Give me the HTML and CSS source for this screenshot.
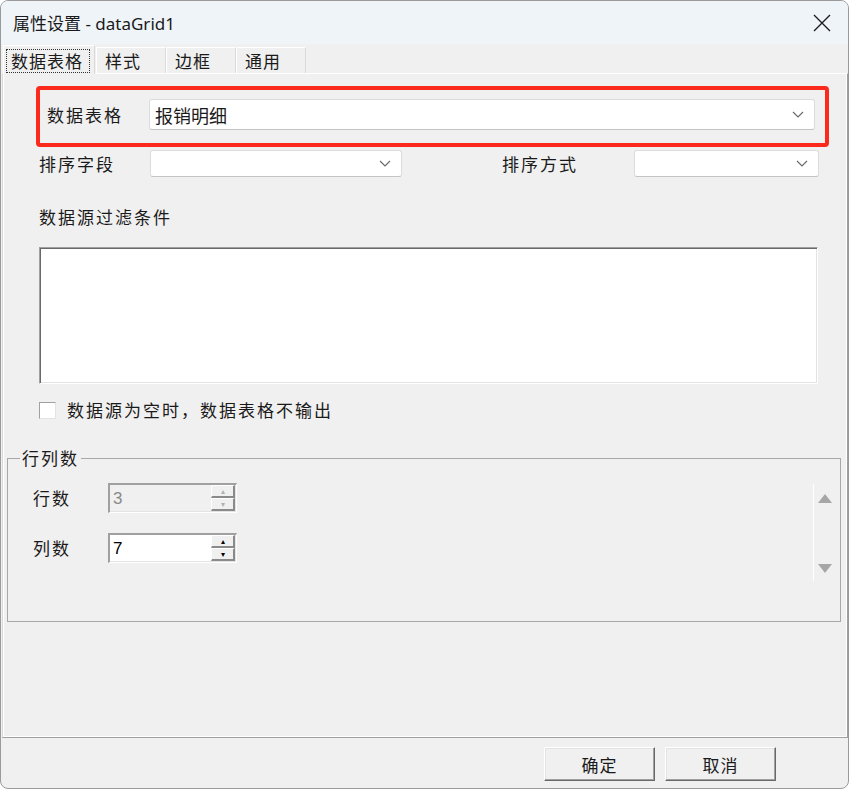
FILE: index.html
```html
<!DOCTYPE html>
<html lang="zh-CN">
<head>
    <meta charset="UTF-8">
    <title>属性设置 - dataGrid1</title>
    <link rel="stylesheet" href="styles.css">
</head>
<body>
    <div class="window">
        <div class="titlebar">
            <span class="title">属性设置 - dataGrid1</span>
            <svg class="close" width="18" height="18" viewBox="0 0 18 18">
                <path d="M1 1 L17 17 M17 1 L1 17" stroke="#1a1a1a" stroke-width="1.3" fill="none"/>
            </svg>
        </div>

        <div class="tabs">
            <div class="tab active"><span class="focus">数据表格</span></div>
            <div class="tab">样式</div>
            <div class="tab">边框</div>
            <div class="tab">通用</div>
        </div>

        <div class="panel">
            <div class="highlight">
                <span class="label">数据表格</span>
                <div class="combo wide">
                    <span class="value">报销明细</span>
                    <svg class="chevron" width="12" height="7" viewBox="0 0 12 7"><path d="M1 1 L6 6 L11 1" stroke="#6a6a6a" stroke-width="1.2" fill="none"/></svg>
                </div>
            </div>

            <div class="sort-row">
                <span class="label sort-field">排序字段</span>
                <div class="combo field-combo">
                    <svg class="chevron" width="12" height="7" viewBox="0 0 12 7"><path d="M1 1 L6 6 L11 1" stroke="#6a6a6a" stroke-width="1.2" fill="none"/></svg>
                </div>
                <span class="label sort-order">排序方式</span>
                <div class="combo order-combo">
                    <svg class="chevron" width="12" height="7" viewBox="0 0 12 7"><path d="M1 1 L6 6 L11 1" stroke="#6a6a6a" stroke-width="1.2" fill="none"/></svg>
                </div>
            </div>

            <div class="filter-label label">数据源过滤条件</div>
            <div class="filter-box"></div>

            <div class="check-row">
                <span class="checkbox"></span>
                <span class="label">数据源为空时，数据表格不输出</span>
            </div>

            <fieldset class="group">
                <legend>行列数</legend>
                <div class="group-body">
                    <div class="fields">
                        <span class="label">行数</span>
                        <div class="spin disabled">
                            <span class="spin-text">3</span>
                            <div class="spin-btns">
                                <span class="spin-btn">&#9652;</span>
                                <span class="spin-btn">&#9662;</span>
                            </div>
                        </div>
                        <span class="label">列数</span>
                        <div class="spin">
                            <span class="spin-text">7</span>
                            <div class="spin-btns">
                                <span class="spin-btn">&#9652;</span>
                                <span class="spin-btn">&#9662;</span>
                            </div>
                        </div>
                    </div>
                    <div class="vscroll">
                        <svg width="14" height="9" viewBox="0 0 14 9"><path d="M7 0 L14 9 L0 9 Z" fill="#a6a6a6"/></svg>
                        <svg width="14" height="9" viewBox="0 0 14 9"><path d="M0 0 L14 0 L7 9 Z" fill="#a6a6a6"/></svg>
                    </div>
                </div>
            </fieldset>
        </div>

        <div class="footer">
            <button class="btn">确定</button>
            <button class="btn">取消</button>
        </div>
    </div>
</body>
</html>
```

FILE: styles.css
```css
body {
    margin: 0;
    background: #ffffff;
    font-family: "Noto Sans CJK SC", "Noto Sans", sans-serif;
    color: #1a1a1a;
}
.window {
    width: 849px;
    height: 789px;
    box-sizing: border-box;
    background: #f0f0f0;
    border: 1px solid #9a9a9a;
    border-radius: 8px;
    overflow: hidden;
}
.titlebar {
    height: 43px;
    background: #eff4f9;
    display: flex;
    align-items: center;
    justify-content: space-between;
    padding: 0 17px 0 12px;
}
.title {
    font-family: "Noto Sans", "Noto Sans CJK SC", sans-serif;
    font-size: 17px;
    color: #1a1a1a;
}
.close { margin-top: 1px; }

/* tabs */
.tabs {
    display: flex;
    align-items: flex-end;
    height: 29px;
    padding-left: 2px;
    position: relative;
    z-index: 1;
}
.tab {
    height: 26px;
    width: 70px;
    box-sizing: border-box;
    padding: 0 0 0 8px;
    font-size: 17px;
    line-height: 25px;
    letter-spacing: 1px;
    border-top: 1px solid #ffffff;
    border-left: 1px solid #ffffff;
    border-right: 1px solid #dadada;
    background: #f0f0f0;
}
.tab.active {
    height: 29px;
    width: 92px;
    padding: 2px 0 0 2px;
    margin-bottom: -1px;
    margin-right: 1px;
}
.focus {
    display: inline-block;
    border: 1px dotted #333;
    padding: 0 6px 0 4px;
    line-height: 22px;
}

/* panel */
.panel {
    margin-left: 1px;
    width: 846px;
    height: 665px;
    box-sizing: border-box;
    border-top: 1px solid #ffffff;
    border-left: 1px solid #d9d9d9;
    border-right: 1px solid #a0a0a0;
    border-bottom: 1px solid #a0a0a0;
    box-shadow: inset 1px 0 #ffffff, inset -1px -1px #ffffff;
}
.label {
    font-size: 17px;
    letter-spacing: 2px;
    line-height: 24px;
    white-space: nowrap;
}
.highlight {
    margin: 12px 0 0 33px;
    width: 793px;
    height: 61px;
    box-sizing: border-box;
    border: 4px solid #fb2a1d;
    border-radius: 4px;
    display: flex;
    align-items: center;
    padding: 0 10px 4px 7px;
}
.highlight .label { width: 102px; }
.combo {
    height: 27px;
    box-sizing: border-box;
    background: #ffffff;
    border: 1px solid #dcdcdc;
    border-bottom-color: #c4c4c4;
    border-radius: 3px;
    display: flex;
    align-items: center;
    justify-content: space-between;
    padding: 0 10px 0 5px;
}
.combo.wide {
    width: 666px;
    height: 31px;
}
.combo .chevron { margin-left: auto; }
.value {
    font-size: 18px;
    line-height: 24px;
}
.sort-row {
    margin: 3px 0 0 36px;
    display: flex;
    align-items: center;
}
.sort-field { width: 111px; }
.field-combo { width: 252px; }
.sort-order { width: 132px; margin-left: 100px; }
.order-combo { width: 185px; }
.filter-label {
    margin: 28px 0 0 36px;
}
.filter-box {
    margin: 18px 0 0 36px;
    width: 779px;
    height: 137px;
    box-sizing: border-box;
    background: #ffffff;
    border-top: 1px solid #a0a0a0;
    border-left: 1px solid #a0a0a0;
    border-right: 1px solid #ffffff;
    border-bottom: 1px solid #ffffff;
    box-shadow: inset 1px 1px #696969, inset -1px -1px #e3e3e3;
}
.check-row {
    margin: 14px 0 0 36px;
    display: flex;
    align-items: center;
    gap: 11px;
}
.checkbox {
    width: 17px;
    height: 17px;
    box-sizing: border-box;
    background: #ffffff;
    border-top: 1px solid #a0a0a0;
    border-left: 1px solid #a0a0a0;
    border-right: 1px solid #e3e3e3;
    border-bottom: 1px solid #e3e3e3;
}

/* group box */
.group {
    margin: 24px 0 0 4px;
    width: 834px;
    box-sizing: border-box;
    border: 1px solid #a8a8a8;
    padding: 13px 0 0 0;
    min-width: 0;
}
.group legend {
    margin-left: 12px;
    padding: 0 2px;
    font-size: 17px;
    letter-spacing: 2px;
    line-height: 24px;
}
.group-body {
    height: 138px;
    display: flex;
    justify-content: space-between;
    align-items: flex-start;
}
.fields {
    padding-left: 25px;
    display: grid;
    grid-template-columns: 75px 129px;
    row-gap: 20px;
    align-items: center;
}
.spin {
    height: 30px;
    box-sizing: border-box;
    display: flex;
    background: #ffffff;
    border-top: 2px solid #a0a0a0;
    border-left: 2px solid #a0a0a0;
    border-right: 1px solid #ffffff;
    border-bottom: 1px solid #ffffff;
    box-shadow: inset -1px -1px #e3e3e3;
    padding: 0 1px 1px 0;
}
.spin.disabled { background: #f0f0f0; }
.spin-text {
    flex: 1;
    font-family: "Liberation Sans", sans-serif;
    font-size: 17px;
    line-height: 27px;
    padding-left: 3px;
    color: #000;
}
.disabled .spin-text { color: #8a8a8a; }
.spin-btns {
    width: 24px;
    display: flex;
    flex-direction: column;
}
.spin-btn {
    flex: 1;
    box-sizing: border-box;
    background: #f0f0f0;
    border-top: 1px solid #ffffff;
    border-left: 1px solid #ffffff;
    border-right: 2px solid #8a8a8a;
    border-bottom: 2px solid #8a8a8a;
    font-size: 8px;
    line-height: 9px;
    text-align: center;
    color: #000;
}
.disabled .spin-btn { color: #b0b0b0; }
.vscroll {
    width: 27px;
    height: 97px;
    margin-top: 1px;
    box-sizing: border-box;
    border-left: 1px solid #ffffff;
    display: flex;
    flex-direction: column;
    justify-content: space-between;
    align-items: center;
    padding: 10px 5px 8px 0;
}

/* footer buttons */
.footer {
    display: flex;
    justify-content: flex-end;
    gap: 10px;
    padding: 9px 72px 0 0;
}
.btn {
    width: 111px;
    height: 34px;
    background: #f0f0f0;
    border: none;
    border-top: 1px solid #ffffff;
    border-left: 1px solid #ffffff;
    border-right: 1px solid #696969;
    border-bottom: 1px solid #696969;
    box-shadow: inset -1px -1px #a0a0a0, inset 1px 1px #e3e3e3;
    font-family: "Noto Sans CJK SC", sans-serif;
    font-size: 17px;
    letter-spacing: 1px;
    color: #1a1a1a;
    padding: 0;
}
```
